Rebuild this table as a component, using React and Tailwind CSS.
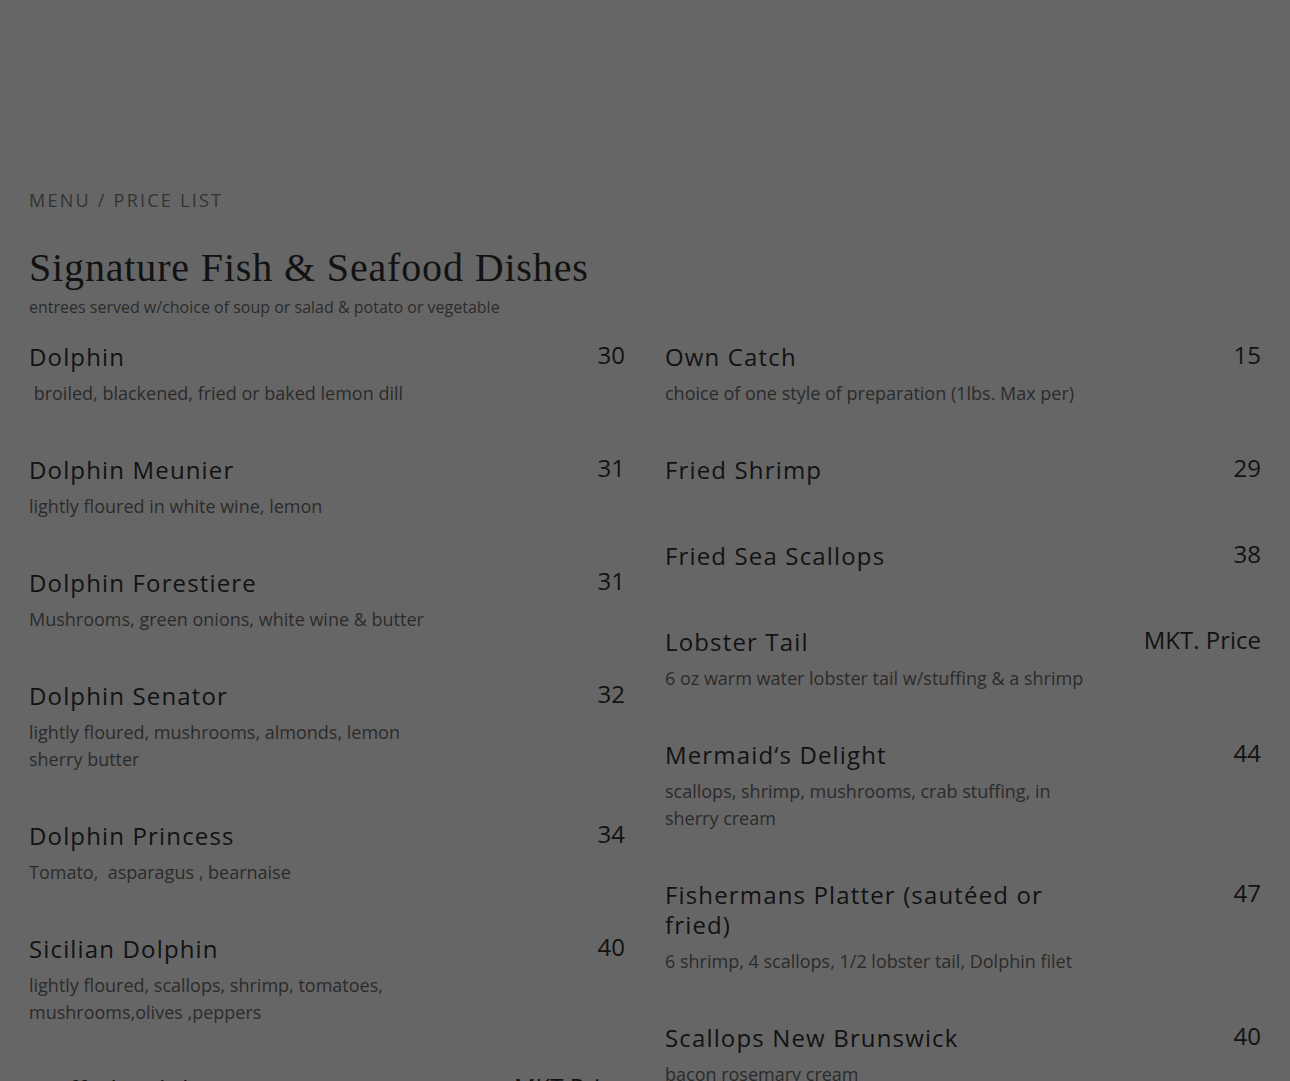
import React from 'react';

const left = [
  { name: 'Dolphin', price: '30', desc: '\u00a0broiled, blackened, fried or baked lemon dill' },
  { name: 'Dolphin Meunier', price: '31', desc: 'lightly floured in white wine, lemon' },
  { name: 'Dolphin Forestiere', price: '31', desc: 'Mushrooms, green onions, white wine & butter' },
  { name: 'Dolphin Senator', price: '32', desc: 'lightly floured, mushrooms, almonds, lemon sherry butter' },
  { name: 'Dolphin Princess', price: '34', desc: 'Tomato,\u00a0 asparagus , bearnaise' },
  { name: 'Sicilian Dolphin', price: '40', desc: 'lightly floured, scallops, shrimp, tomatoes, mushrooms,olives ,peppers' },
  { name: 'Stuffed Dolphin', price: 'MKT Price', desc: 'crab stuffing, lemon butter' },
];

const right = [
  { name: 'Own Catch', price: '15', desc: 'choice of one style of preparation (1lbs. Max per)' },
  { name: 'Fried Shrimp', price: '29', desc: '' },
  { name: 'Fried Sea Scallops', price: '38', desc: '' },
  { name: 'Lobster Tail', price: 'MKT. Price', desc: '6 oz warm water lobster tail w/stuffing & a shrimp' },
  { name: 'Mermaid‘s Delight', price: '44', desc: 'scallops, shrimp, mushrooms, crab stuffing, in sherry cream' },
  { name: 'Fishermans Platter (sautéed or fried)', price: '47', desc: '6 shrimp, 4 scallops, 1/2 lobster tail, Dolphin filet' },
  { name: 'Scallops New Brunswick', price: '40', desc: 'bacon rosemary cream' },
];

// one dish row: name + description on the left, price pushed right
const Dish = ({ item }) => (
  <div className="flex justify-between pb-12">
    <div className="w-[425px]">
      <h3 className="text-[24px] leading-[30px] tracking-[1.15px] text-[#121212]">{item.name}</h3>
      <p className="mt-2 text-[18px] leading-[27px] text-[#2b2b2b]">{item.desc}</p>
    </div>
    <span className="text-[24px] leading-[26px] text-[#121212] whitespace-nowrap">{item.price}</span>
  </div>
);

export default function App() {
  return (
    <div className="h-[1081px] overflow-hidden bg-[#666666] px-[29px] pt-[187px]" style={{ fontFamily: '"Open Sans", "Liberation Sans", sans-serif' }}>
      <p className="text-[18px] leading-[27px] tracking-[2.25px] text-[#333333] uppercase">Menu / Price List</p>
      <h2 className="mt-[30px] text-[40px] leading-[48px] tracking-[0.85px] text-[#121212]" style={{ fontFamily: '"Liberation Serif", serif' }}>
        Signature Fish &amp; Seafood Dishes
      </h2>
      <p className="mt-[3px] text-[16px] leading-[24px] text-[#2b2b2b]">entrees served w/choice of soup or salad &amp; potato or vegetable</p>

      <div className="mt-[23px] grid grid-cols-2 gap-x-10">
        <div className="flex flex-col">
          {left.map((item, i) => <Dish key={i} item={item} />)}
        </div>
        <div className="flex flex-col">
          {right.map((item, i) => <Dish key={i} item={item} />)}
        </div>
      </div>
    </div>
  );
}
